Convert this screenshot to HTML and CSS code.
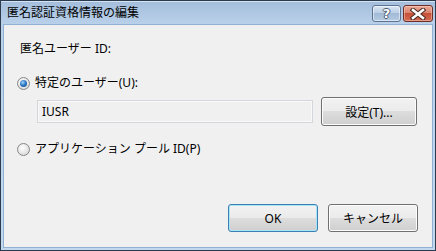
FILE: index.html
```html
<!DOCTYPE html>
<html lang="ja">
<head>
  <meta charset="UTF-8">
  <title>匿名認証資格情報の編集</title>
  <link rel="stylesheet" href="styles.css">
</head>
<body>
  <div class="window">
    <div class="titlebar">
      <span class="title">匿名認証資格情報の編集</span>
      <div class="caption-buttons">
        <button class="cap cap-help"><span class="qmark">?</span></button>
        <button class="cap cap-close">
          <svg width="16" height="12" viewBox="0 0 16 12">
            <path d="M3 2 L13 10 M13 2 L3 10" stroke="#4a2a24" stroke-width="4.6" stroke-linecap="square"/>
            <path d="M3 2 L13 10 M13 2 L3 10" stroke="#ffffff" stroke-width="2.6" stroke-linecap="square"/>
          </svg>
        </button>
      </div>
    </div>

    <div class="client">
      <div class="label">匿名ユーザー ID:</div>

      <label class="radio-row first">
        <span class="radio checked"></span>
        <span>特定のユーザー(U):</span>
      </label>

      <div class="field-row">
        <div class="textbox">IUSR</div>
        <button class="btn btn-set">設定(T)...</button>
      </div>

      <label class="radio-row second">
        <span class="radio"></span>
        <span>アプリケーション プール ID(P)</span>
      </label>

      <div class="footer">
        <button class="btn btn-default">OK</button>
        <button class="btn">キャンセル</button>
      </div>
    </div>
  </div>
</body>
</html>
```

FILE: styles.css
```css
body {
  margin: 0;
  font-family: "Noto Sans", "Noto Sans CJK JP", sans-serif;
  font-size: 12px;
  color: #000;
  background: #fff;
}
.window {
  width: 436px;
  height: 251px;
  box-sizing: border-box;
  border: 1px solid #2b3a4c;
  background: linear-gradient(#a3bddb, #bad1ea 24px, #c2d8ef);
  display: flex;
  flex-direction: column;
}
.titlebar {
  height: 23px;
  display: flex;
  align-items: center;
  padding-left: 6px;
  box-shadow: inset 0 1px 0 #d4e3f3;
}
.title {
  flex: 1;
  font-family: "Noto Sans CJK JP", sans-serif;
  font-size: 12px;
  line-height: 16px;
  color: #000;
  padding-bottom: 1px;
}
.caption-buttons {
  display: flex;
  gap: 2px;
  margin-right: 2px;
  margin-top: 2px;
}
.cap {
  height: 17px;
  padding: 0;
  border-radius: 3px;
  display: flex;
  align-items: center;
  justify-content: center;
}
.cap-help {
  width: 29px;
  border: 1px solid #5d7390;
  background: linear-gradient(#d9e5f3, #bccfe6 45%, #a2bad6 50%, #b6cbe3);
  box-shadow: inset 0 0 0 1px rgba(255,255,255,0.5);
}
.qmark {
  font-family: "DejaVu Sans", sans-serif;
  font-weight: bold;
  font-size: 13px;
  line-height: 13px;
  color: #fff;
  text-shadow: -1px 0 #4a5a70, 1px 0 #4a5a70, 0 -1px #4a5a70, 0 1px #4a5a70;
}
.cap-close {
  width: 30px;
  border: 1px solid #6e2e25;
  background: linear-gradient(#e9a997, #d98470 45%, #c65138 50%, #d26c52);
  box-shadow: inset 0 0 0 1px rgba(255,220,210,0.45);
}
.client {
  flex: 1;
  margin: 0 2px 2px 2px;
  border: 1px solid #91b0d4;
  background: #f0f0f0;
  display: flex;
  flex-direction: column;
  padding: 16px 14px 15px 13px;
}
.label {
  line-height: 16px;
  padding-left: 3px;
}
.radio-row {
  display: flex;
  align-items: center;
  gap: 5px;
  line-height: 16px;
}
.radio-row.first {
  margin-top: 18px;
}
.radio-row.second {
  margin-top: 15px;
}
.radio {
  width: 13px;
  height: 13px;
  box-sizing: border-box;
  border-radius: 50%;
  border: 1px solid #84878a;
  background: radial-gradient(circle at 40% 35%, #ffffff, #e3e3e3 60%, #c9c9c9);
  display: flex;
  align-items: center;
  justify-content: center;
}
.radio.checked::after {
  content: "";
  width: 7px;
  height: 7px;
  border-radius: 50%;
  background: radial-gradient(circle at 40% 35%, #9fd3f7, #2a74c0 50%, #154c8c);
}
.field-row {
  display: flex;
  align-items: center;
  gap: 8px;
  margin: 6px 0 0 20px;
}
.textbox {
  width: 276px;
  height: 23px;
  box-sizing: border-box;
  border: 1px solid #d3d6db;
  box-shadow: inset 0 0 0 1px #f8f8f8;
  background: #f0f0f0;
  padding-left: 4px;
  line-height: 21px;
}
.btn {
  font-family: "Noto Sans", "Noto Sans CJK JP", sans-serif;
  font-size: 12px;
  color: #000;
  height: 28px;
  width: 90px;
  border: 1px solid #707070;
  border-radius: 3px;
  background: linear-gradient(#f2f2f2, #ebebeb 50%, #dddddd 50%, #cfcfcf);
  box-shadow: inset 0 0 0 1px #fcfcfc;
  padding: 0;
}
.btn-set {
  width: 96px;
  height: 29px;
}
.btn-default {
  border-color: #3c7fb1;
  box-shadow: inset 0 0 0 1px #a6e5fa;
}
.footer {
  margin-top: auto;
  display: flex;
  justify-content: flex-end;
  gap: 10px;
}
```
